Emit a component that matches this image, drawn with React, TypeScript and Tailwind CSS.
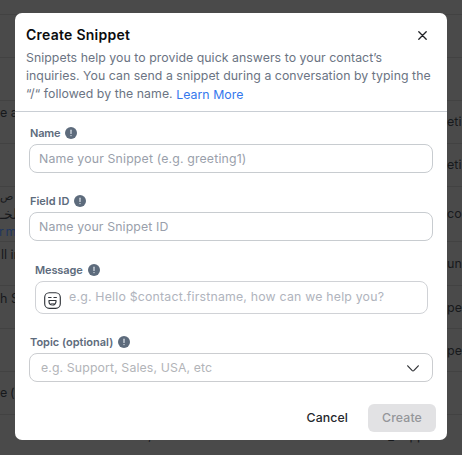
import type { ReactNode } from "react"

interface TableRow {
  height: string
  left?: ReactNode
  right?: string
  leftPad?: string
  rightPad?: string
}

const rows: TableRow[] = [
  { height: "h-[15px]" },
  { height: "h-[43px]" },
  { height: "h-[43px]" },
  { height: "h-[43px]", left: "e a", right: "eti", leftPad: "pt-[3px]", rightPad: "pt-[12px]" },
  { height: "h-[43px]", right: "eti", rightPad: "pt-[12px]" },
  {
    height: "h-[55px]",
    left: (
      <>
        <div className="text-[11px]">ى ص</div>
        <div className="text-[14px]">لخـ</div>
        <div className="mt-px -ml-px tracking-[-0.8px] text-[#20365f]">r m</div>
      </>
    ),
    right: "cou",
    leftPad: "pt-[1px]",
    rightPad: "pt-[18px]",
  },
  { height: "h-[44px]", left: <span className="pl-px">ll in</span>, right: "un", leftPad: "pt-[4px]", rightPad: "pt-[13px]" },
  { height: "h-[43px]", left: "h S", right: "pe", leftPad: "pt-[4px]", rightPad: "pt-[13px]" },
  { height: "h-[43px]", right: "pe", rightPad: "pt-[13px]" },
  { height: "h-[43px]", left: <span className="tracking-[-0.4px]">e (U</span>, leftPad: "pt-[12px]" },
]

function InfoIcon() {
  return (
    <svg className="h-3 w-3 shrink-0" viewBox="0 0 12 12">
      <circle cx="6" cy="6" r="6" fill="#5d6b7c" />
      <path d="M6 3.2v3.2" stroke="#dfe5ec" strokeWidth="1.2" strokeLinecap="round" />
      <circle cx="6" cy="8.6" r="0.7" fill="#dfe5ec" />
    </svg>
  )
}

function EmojiIcon() {
  return (
    <svg className="h-[17px] w-[17px] shrink-0" viewBox="0 0 17 17" fill="none" stroke="#30343a" strokeWidth="1.15" strokeLinecap="round" strokeLinejoin="round">
      <rect x="0.7" y="0.7" width="15.6" height="15.6" rx="4.6" />
      <path d="M4.6 5.5h2.5M9.9 5.5h2.5M5 8.5h7v1a3.5 3.5 0 0 1-7 0z" />
      <path d="M7 11.5h3" strokeWidth="0.6" />
    </svg>
  )
}

function Label({ children }: { children: ReactNode }) {
  return (
    <div className="flex h-4 items-center gap-[5px] text-[11px] leading-4 font-semibold text-[#5d6b7c]">
      {children}
      <InfoIcon />
    </div>
  )
}

export default function App() {
  return (
    <div className="relative h-[455px] w-[462px] overflow-hidden bg-[#4a4a4a] font-['Inter','Noto_Sans',sans-serif]">
      {/* Table behind the overlay */}
      <div className="text-[12.5px] leading-[17px] text-[#17191c]">
        {rows.map((row, idx) => (
          <div key={idx} className={`flex justify-between border-b border-[#424242] ${row.height}`}>
            <div className={`w-[30px] whitespace-nowrap ${row.leftPad ?? ""}`}>{row.left}</div>
            <div className={`w-[15px] whitespace-nowrap ${row.rightPad ?? ""}`}>{row.right}</div>
          </div>
        ))}
        <div className="flex h-[40px] pt-[12px] pl-[148px]">
          <span className="w-[231px]">,</span>
          <span>G_Supp</span>
        </div>
      </div>

      {/* Dialog */}
      <div className="absolute top-[13px] left-[15px] flex h-[427px] w-[432px] flex-col rounded-[7px] bg-white">
        <header className="h-[99px] shrink-0 border-b border-[#c9ced4] pt-[13px] pl-[11px]">
          <div className="flex items-center justify-between pr-[20px]">
            <h1 className="text-[14px] leading-[18px] font-semibold tracking-[0.25px] text-[#0b0c0e]">Create Snippet</h1>
            <svg className="h-[9px] w-[9px]" viewBox="0 0 9 9" stroke="#202226" strokeWidth="1.3" strokeLinecap="round">
              <path d="M.8.8l7.4 7.4M8.2.8L.8 8.2" />
            </svg>
          </div>
          <p className="mt-[5px] text-[12.3px] leading-[18px] tracking-[0.05px] whitespace-nowrap text-[#6b7483]">
            Snippets help you to provide quick answers to your contact’s
            <br />
            inquiries. You can send a snippet during a conversation by typing the
            <br />
            “/“ followed by the name. <a className="relative top-px text-[#3478ed]">Learn More</a>
          </p>
        </header>

        <div className="flex flex-col pr-[14px] pl-[14px]">
          <div className="mt-[13px]">
            <div className="pl-px">
              <Label>
                <span className="tracking-[-0.2px]">Name</span>
              </Label>
            </div>
            <div className="mt-[3px] flex h-[29px] items-center rounded-lg border border-[#c8ccd0] pt-px pl-[9px] text-[12.3px] tracking-[0.16px] text-[#9a9fab]">
              Name your Snippet (e.g. greeting1)
            </div>
          </div>
          <div className="mt-[20px]">
            <div className="pl-px">
              <Label>Field ID</Label>
            </div>
            <div className="mt-[3px] flex h-[29px] items-center rounded-lg border border-[#c8ccd0] pt-px pl-[9px] text-[12.3px] tracking-[0.12px] text-[#9a9fab]">
              Name your Snippet ID
            </div>
          </div>
          <div className="mt-[21px] mr-[5px] ml-[6px]">
            <Label>
              <span className="tracking-[-0.12px]">Message</span>
            </Label>
            <div className="mt-[3px] flex h-[33px] rounded-lg border border-[#d0d2d6] pl-2 text-[12.3px] leading-[30px] tracking-[0.21px] text-[#b0b4bd]">
              <div className="mt-[10px] mr-2">
                <EmojiIcon />
              </div>
              e.g. Hello $contact.firstname, how can we help you?
            </div>
          </div>
          <div className="mt-[20px]">
            <div className="pl-px">
              <Label>Topic (optional)</Label>
            </div>
            <div className="mt-[3px] flex h-[29px] items-center justify-between rounded-lg border border-[#cbcdd0] pt-px pr-[13px] pl-[11px] text-[12.3px] tracking-[0.12px] text-[#b2b4b8]">
              e.g. Support, Sales, USA, etc
              <svg className="h-[7px] w-[12px]" viewBox="0 0 12 7" fill="none" stroke="#303236" strokeWidth="1.2" strokeLinecap="round">
                <path d="M.7.8L5 5.3q1 1 2 0L11.3.8" />
              </svg>
            </div>
          </div>
        </div>

        <footer className="mt-[22px] flex justify-end gap-5 pr-[11px] text-[12.3px] font-medium tracking-[0.1px]">
          <button className="h-7 text-[#25282d]">Cancel</button>
          <button className="h-7 w-[68px] rounded-md bg-[#e2e2e4] text-[#94969a]">Create</button>
        </footer>
      </div>
    </div>
  )
}
